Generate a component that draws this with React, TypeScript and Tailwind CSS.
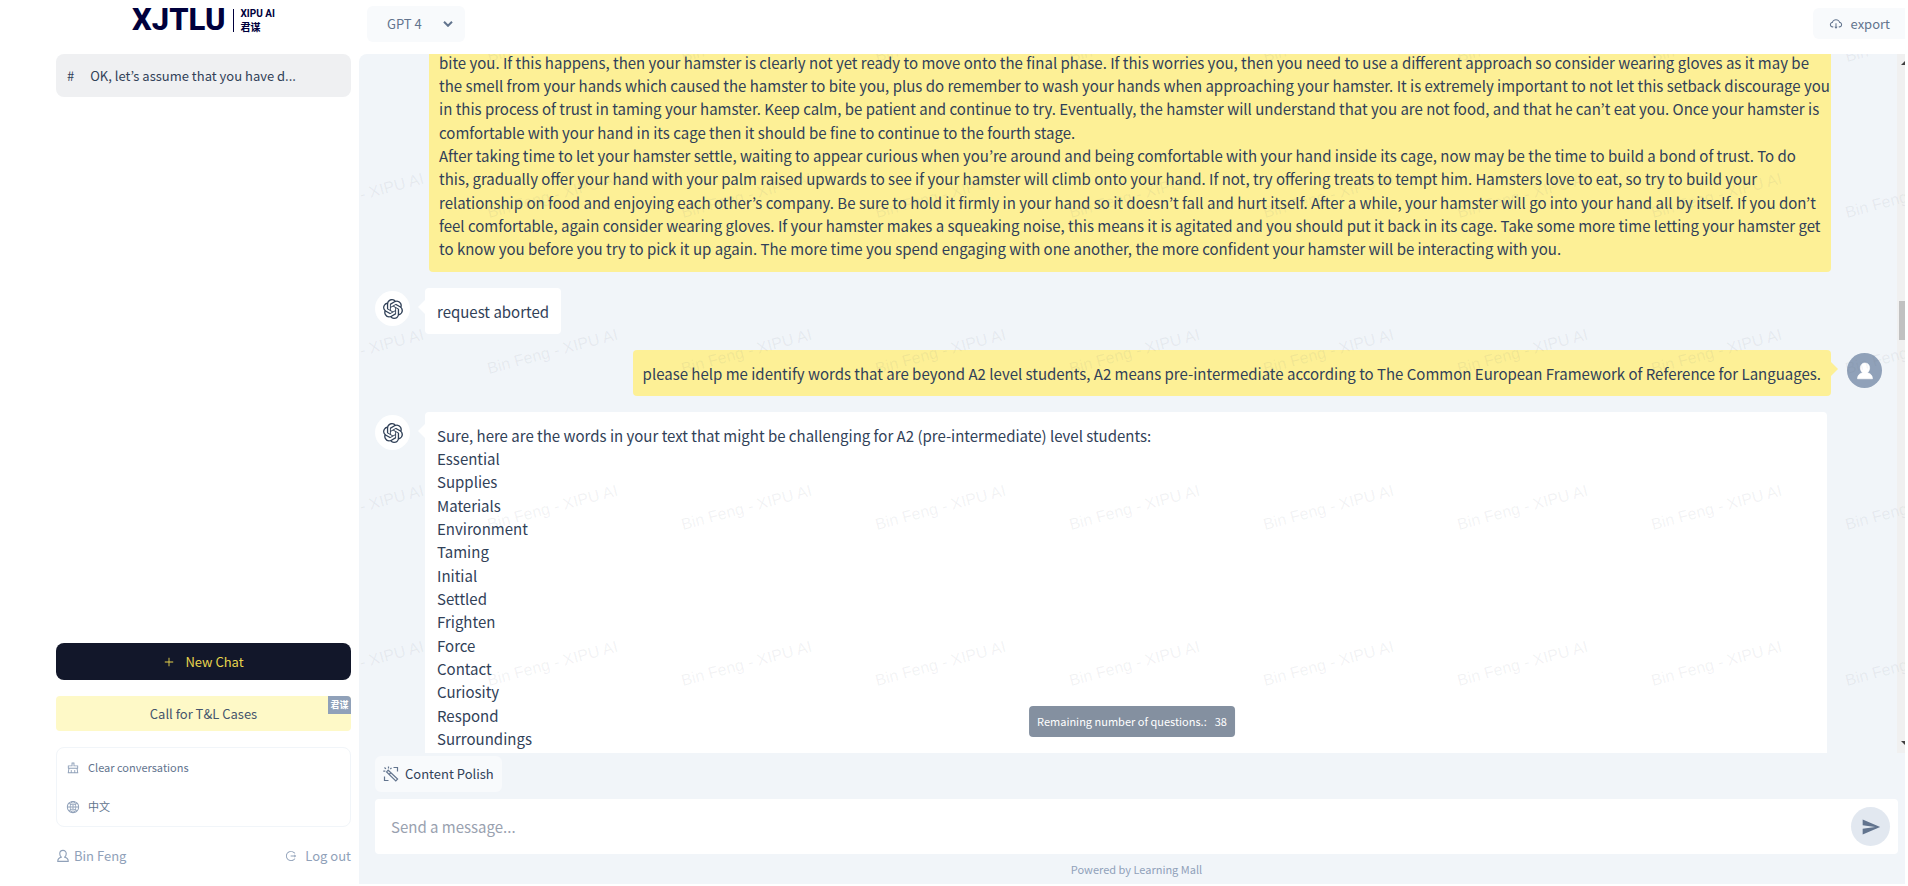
import type { ReactNode } from 'react';
import {
  AiOutlineClear,
  AiOutlineCloudDownload,
  AiOutlineGlobal,
  AiOutlineLogout,
  AiOutlinePlus,
} from 'react-icons/ai';
import { MdSend } from 'react-icons/md';
import { SiOpenai } from 'react-icons/si';
import clsx from 'clsx';

const STORY_LINES = [
  'bite you. If this happens, then your hamster is clearly not yet ready to move onto the final phase. If this worries you, then you need to use a different approach so consider wearing gloves as it may be',
  'the smell from your hands which caused the hamster to bite you, plus do remember to wash your hands when approaching your hamster. It is extremely important to not let this setback discourage you',
  'in this process of trust in taming your hamster. Keep calm, be patient and continue to try. Eventually, the hamster will understand that you are not food, and that he can’t eat you. Once your hamster is',
  'comfortable with your hand in its cage then it should be fine to continue to the fourth stage.',
  'After taking time to let your hamster settle, waiting to appear curious when you’re around and being comfortable with your hand inside its cage, now may be the time to build a bond of trust. To do',
  'this, gradually offer your hand with your palm raised upwards to see if your hamster will climb onto your hand. If not, try offering treats to tempt him. Hamsters love to eat, so try to build your',
  'relationship on food and enjoying each other’s company. Be sure to hold it firmly in your hand so it doesn’t fall and hurt itself. After a while, your hamster will go into your hand all by itself. If you don’t',
  'feel comfortable, again consider wearing gloves. If your hamster makes a squeaking noise, this means it is agitated and you should put it back in its cage. Take some more time letting your hamster get',
  'to know you before you try to pick it up again. The more time you spend engaging with one another, the more confident your hamster will be interacting with you.',
];

const WORD_LINES = [
  'Sure, here are the words in your text that might be challenging for A2 (pre-intermediate) level students:',
  'Essential',
  'Supplies',
  'Materials',
  'Environment',
  'Taming',
  'Initial',
  'Settled',
  'Frighten',
  'Force',
  'Contact',
  'Curiosity',
  'Respond',
  'Surroundings',
];

const WATERMARK_COLS = Array.from({ length: 9 }, (_, i) => i * 194 - 64);
const WATERMARK_ROWS = Array.from({ length: 5 }, (_, i) => i * 156 + 8);

function Lines({ lines }: { lines: string[] }) {
  return (
    <p className="text-[15px] leading-[23px] whitespace-nowrap text-slate-700 [&>span:nth-child(3n)]:mb-px">
      {lines.map((line) => (
        <span key={line} className="block">
          {line}
        </span>
      ))}
    </p>
  );
}

function PersonIcon({ className, filled }: { className?: string; filled?: boolean }) {
  return (
    <svg
      viewBox="0 0 16 16"
      className={className}
      fill={filled ? 'currentColor' : 'none'}
      stroke="currentColor"
      strokeWidth={filled ? 0.5 : 1.3}
      strokeLinejoin="round"
      aria-hidden
    >
      <path d="M8 1.600c2.200 0 3.700 1.600 3.700 3.900 0 1.700-.7 3.100-1.900 3.800 2.400.5 4.200 2.200 4.200 4.900H2c0-2.700 1.800-4.400 4.200-4.900C5 8.600 4.300 7.200 4.300 5.500 4.300 3.200 5.800 1.600 8 1.600Z" />
    </svg>
  );
}

function PolishIcon() {
  return (
    <svg
      viewBox="0 0 16 16"
      className="size-4 text-slate-500"
      fill="none"
      stroke="currentColor"
      strokeWidth="1.2"
      aria-hidden
    >
      <path d="M10.500 1.500h4v4M1.500 10.500v4h4" />
      <path d="M5.200 4.200 14.600 13l-1.800 1.900L3.600 5.900ZM7.900 6.700 6.100 8.500" />
      <path d="M5.500.5v2M1.500 1.500l1.400 1.400M.3 5.200h2M8.500 1.800 7.300 3" />
    </svg>
  );
}

function Logo() {
  return (
    <a
      href="#"
      className="flex h-10 items-center justify-center text-[#00003c]"
      aria-label="XJTLU XIPU AI"
    >
      <span className="font-['Roboto'] text-[31px] leading-8 font-extrabold">XJTLU</span>
      <span className="mr-1.5 ml-2 h-[23px] w-px bg-[#00003c]" />
      <span className="flex flex-col text-[10px] leading-[13px] font-bold">
        <span className="font-['Roboto']">XIPU AI</span>
        <span className="font-['Noto_Sans_CJK_SC']">君谋</span>
      </span>
    </a>
  );
}

function Sidebar() {
  return (
    <aside className="flex w-[359px] shrink-0 flex-col pr-2 pb-4 pl-14 text-[13px]">
      <Logo />
      <button className="mt-3.5 flex h-[43px] items-center gap-4 rounded-lg bg-[#eff0f2] px-[11px] text-slate-700">
        <span>#</span>
        OK, let’s assume that you have d...
      </button>

      <div className="mt-auto flex flex-col">
        <button className="flex h-[37px] items-center justify-center gap-2.5 rounded-lg bg-[#12172a] text-[#e8d44d]">
          <AiOutlinePlus className="size-3" aria-hidden />
          New Chat
        </button>
        <a
          href="#"
          className="relative mt-4 flex h-[35px] items-center justify-center rounded-sm bg-[#fef9c7] text-slate-600"
        >
          Call for T&amp;L Cases
          <span className="absolute top-0 right-0 flex h-[18px] w-[23px] items-center justify-center rounded-tr-sm bg-slate-400 font-['Noto_Sans_CJK_SC'] text-[9px] font-bold text-white">
            君谋
          </span>
        </a>
        <div className="mt-4 flex h-20 flex-col justify-around rounded-lg border border-slate-100 px-[9px] text-[11px] text-slate-500">
          <button className="flex items-center gap-2">
            <AiOutlineClear className="size-3.5 text-slate-400" aria-hidden />
            Clear conversations
          </button>
          <button className="flex items-center gap-2 font-['Noto_Sans_CJK_SC']">
            <AiOutlineGlobal className="size-3.5 text-slate-400" aria-hidden />
            中文
          </button>
        </div>
        <div className="mt-[15px] flex h-7 items-center justify-between text-slate-400">
          <span className="flex items-center gap-1">
            <PersonIcon className="size-3.5" />
            Bin Feng
          </span>
          <button className="flex items-center gap-2">
            <AiOutlineLogout className="size-3" aria-hidden />
            Log out
          </button>
        </div>
      </div>
    </aside>
  );
}

function Topbar() {
  return (
    <header className="flex h-[54px] shrink-0 items-start justify-between pt-1.5 pl-2 text-[13px] text-slate-500">
      <div className="relative">
        <select
          aria-label="Model"
          className="h-9 w-[98px] appearance-none rounded-md bg-slate-50 pl-5 outline-none"
        >
          <option>GPT 4</option>
        </select>
        <svg
          viewBox="0 0 10 6"
          className="pointer-events-none absolute top-[15px] right-3 h-1.5 w-2.5"
          fill="none"
          stroke="currentColor"
          strokeWidth="2"
          aria-hidden
        >
          <path d="M1 .8 5 4.800 9 .8" />
        </svg>
      </div>
      <button className="mt-0.5 flex h-[31px] items-center gap-2 rounded-l-md bg-slate-50 pr-[15px] pl-4">
        <AiOutlineCloudDownload className="size-3.5" aria-hidden />
        export
      </button>
    </header>
  );
}

function BotMessage({ children, wide }: { children: ReactNode; wide?: boolean }) {
  return (
    <div className="flex items-start gap-2">
      <span className="mt-[3px] flex size-[35px] shrink-0 items-center justify-center rounded-full bg-white text-slate-700">
        <SiOpenai className="size-5" aria-hidden />
      </span>
      <div className={clsx('flex items-start', wide && 'mr-[70px] grow')}>
        <span className="mt-3 border-y-[7px] border-r-[7px] border-y-transparent border-r-white" />
        <div className={clsx('rounded-sm bg-white px-3 pt-3 pb-[11px]', wide && 'grow')}>{children}</div>
      </div>
    </div>
  );
}

function Watermark() {
  return (
    <svg
      className="pointer-events-none absolute inset-0 size-full font-['Liberation_Sans'] text-base"
      fill="#6b7280"
      fillOpacity="0.09"
      aria-hidden
    >
      {WATERMARK_ROWS.map((y) =>
        WATERMARK_COLS.map((x) => (
          <text key={`${x}-${y}`} transform={`translate(${x} ${y}) rotate(-15)`}>
            Bin Feng - XIPU AI
          </text>
        )),
      )}
    </svg>
  );
}

function ScrollTrack() {
  return (
    <div className="flex w-2 shrink-0 flex-col items-end overflow-hidden bg-[#f0f0f0]">
      <span className="mt-[7px] -mr-1 border-x-4 border-b-4 border-x-transparent border-b-neutral-700" />
      <span className="mt-[236px] h-[39px] w-1.5 bg-[#c1c1c1]" />
      <span className="mt-auto -mr-1 mb-2 border-x-4 border-t-4 border-x-transparent border-t-neutral-700" />
    </div>
  );
}

function Messages() {
  return (
    <section className="relative flex min-h-0 grow overflow-hidden rounded-tl-lg">
      <div className="flex min-w-0 grow flex-col gap-4 pl-4">
        {/* older part of the thread is scrolled out above */}
        <div className="-mt-[3px] mr-[66px] ml-[54px] shrink-0 rounded-b-sm bg-[#fdf096] px-2.5 pb-[11px]">
          <Lines lines={STORY_LINES} />
        </div>

        <BotMessage>
          <Lines lines={['request aborted']} />
        </BotMessage>

        <div className="mr-[15px] flex items-start justify-end">
          <div className="rounded-sm bg-[#fdf096] px-2.5 pt-3 pb-[11px]">
            <Lines
              lines={[
                'please help me identify words that are beyond A2 level students, A2 means pre-intermediate according to The Common European Framework of Reference for Languages.',
              ]}
            />
          </div>
          <span className="mt-3 mr-[9px] border-y-[7px] border-l-[7px] border-y-transparent border-l-[#fdf096]" />
          <span className="mt-[3px] flex size-[35px] shrink-0 items-center justify-center rounded-full bg-slate-400 text-white">
            <PersonIcon className="size-5" filled />
          </span>
        </div>

        <BotMessage wide>
          <Lines lines={WORD_LINES} />
        </BotMessage>
      </div>
      <ScrollTrack />
      <Watermark />
      <div className="absolute bottom-4 left-1/2 flex h-[31px] -translate-x-1/2 items-center gap-2 rounded-sm bg-[#8490a0] px-2 text-[11px] whitespace-nowrap text-white">
        <span>Remaining number of questions.:</span>
        <span>38</span>
      </div>
    </section>
  );
}

function Composer() {
  return (
    <footer className="flex shrink-0 flex-col items-start pt-[3px] pr-[7px] pl-4">
      <button className="flex h-9 items-center gap-1.5 rounded-md bg-slate-50 px-2 text-[13px] text-slate-700">
        <PolishIcon />
        Content Polish
      </button>
      <form
        className="mt-[7px] flex h-[55px] w-full items-center rounded-sm bg-white pr-2 pl-4"
        onSubmit={(e) => e.preventDefault()}
      >
        <input
          type="text"
          aria-label="Message"
          placeholder="Send a message..."
          className="h-full grow text-[15px] outline-none placeholder:text-gray-400"
        />
        <button
          aria-label="Send"
          className="flex size-[39px] items-center justify-center rounded-full bg-slate-200 text-slate-500"
        >
          <MdSend className="size-5" aria-hidden />
        </button>
      </form>
      <p className="flex h-[30px] w-full items-center justify-center text-[11px] text-slate-400">
        Powered by Learning Mall
      </p>
    </footer>
  );
}

export default function App() {
  return (
    <div className="flex h-screen bg-white font-['Noto_Sans_CJK_KR',sans-serif]">
      <Sidebar />
      <div className="flex min-w-0 grow flex-col pr-[3px] pb-0.5">
        <Topbar />
        <main className="flex min-h-0 grow flex-col rounded-tl-lg bg-slate-100">
          <Messages />
          <Composer />
        </main>
      </div>
    </div>
  );
}
